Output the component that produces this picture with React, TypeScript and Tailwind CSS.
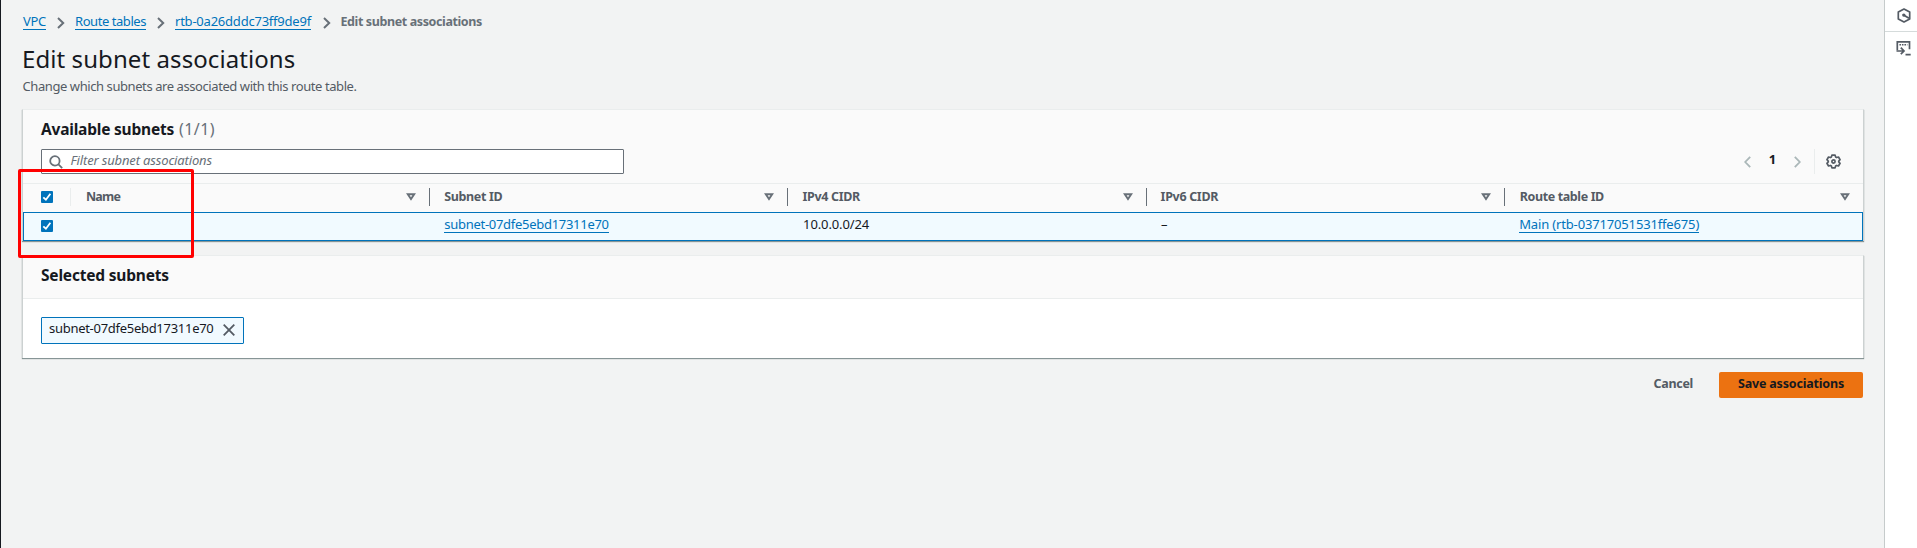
import type { ReactNode } from "react";
import clsx from "clsx";

function Link({ children, className }: { children: ReactNode; className?: string }) {
  return (
    <a
      href="#"
      className={clsx(
        "block h-[18px] whitespace-nowrap border-b border-[#0073bb] leading-[18px] text-[#0073bb]",
        className,
      )}
    >
      {children}
    </a>
  );
}

function Crumb() {
  return (
    <svg className="mt-[5px] h-3 w-2 shrink-0" viewBox="0 0 8 12" fill="none" stroke="#687078" strokeWidth="2">
      <path d="M1 1l5.2 5L1 11" />
    </svg>
  );
}

function Checkbox() {
  return (
    <svg className="size-3 shrink-0" viewBox="0 0 12 12" role="checkbox" aria-checked="true">
      <rect width="12" height="12" rx="1" fill="#0073bb" />
      <path d="M2.3 6.3l2.6 2.4 4.5-5.9" fill="none" stroke="#fff" strokeWidth="1.8" />
    </svg>
  );
}

function SortIcon() {
  return (
    <svg className="ml-auto h-[8px] w-[10px]" viewBox="0 0 10 8" fill="none" stroke="#687078" strokeWidth="1.9">
      <path d="M1.8 1.2h6.4L5 6z" />
    </svg>
  );
}

const columns = [
  { label: "Name", spacing: "tracking-[-0.82px]" },
  { label: "Subnet ID", spacing: "tracking-[-0.35px]" },
  { label: "IPv4 CIDR", spacing: "tracking-[-0.32px]" },
  { label: "IPv6 CIDR", spacing: "tracking-[-0.32px]" },
  { label: "Route table ID", spacing: "tracking-[-0.39px]" },
];

const grid = "grid grid-cols-[49px_repeat(5,minmax(0,1fr))]";

function AvailableSubnets() {
  return (
    <section className="relative h-[132px] border border-b-0 border-x-[#ccd1d1] border-t-[#eaeded] bg-[#fafafa] shadow-[0_1px_1px_#879596]">
      <h2 className="ml-[18px] flex h-[39px] gap-[5px] pt-[7px] text-[15.5px] font-bold leading-[24px] tracking-[-0.21px]">
        Available subnets
        <span className="text-[16px] font-normal tracking-[0.4px] text-[#687078]">(1/1)</span>
      </h2>
      <div className="flex h-[34px] items-start justify-between pl-[18px] pr-[22px]">
        <div className="flex h-[25px] w-[583px] items-center rounded-[1px] border border-[#687078] bg-white pl-[7px]">
          <svg className="size-[14px]" viewBox="0 0 14 14" fill="none" stroke="#687078" strokeWidth="1.8">
            <circle cx="5.9" cy="5.9" r="4.7" />
            <path d="M9.2 9.2l4 4" />
          </svg>
          <span className="-mt-[3px] ml-[7.5px] text-[13px] italic leading-[20px] tracking-[-0.15px] text-[#687078]">
            Filter subnet associations
          </span>
        </div>
        <div className="flex h-[25px] items-center">
          <svg className="h-3 w-[7px]" viewBox="0 0 7 12" fill="none" stroke="#aab7b8" strokeWidth="1.8">
            <path d="M6.2 .8L1.2 6l5 5.2" />
          </svg>
          <span className="-mt-[5px] w-[43px] text-center text-[13px] font-bold leading-[20px]">1</span>
          <svg className="h-3 w-[7px]" viewBox="0 0 7 12" fill="none" stroke="#aab7b8" strokeWidth="1.8">
            <path d="M.8 .8l5 5.2-5 5.2" />
          </svg>
          <span className="ml-[13px] mr-[11px] h-[25px] w-px bg-[#eaeded]" />
          <svg className="size-[15px]" viewBox="0 0 16 16" fill="none" stroke="#545b64" strokeWidth="1.8" strokeLinejoin="round">
            <path d="M6.3 1.2h3.4l.5 1.9 1.2.7 1.9-.6 1.7 2.9-1.4 1.4v1l1.4 1.4-1.7 2.9-1.9-.6-1.2.7-.5 1.9H6.3l-.5-1.9-1.2-.7-1.9.6L1 9.9l1.4-1.4v-1L1 6.1l1.7-2.9 1.9.6 1.2-.7z" />
            <circle cx="8" cy="8" r="1.7" />
          </svg>
        </div>
      </div>
      <div className={clsx(grid, "h-[29px] border-t border-[#eaeded] text-[12.5px] font-bold text-[#545b64]")}>
        <div className="mt-[4px] flex h-[18px] w-[48px] items-center border-r border-[#eaeded] pl-[18px]">
          <Checkbox />
        </div>
        {columns.map((c, i) => (
          <div
            key={c.label}
            className={clsx(
              "mt-[4px] flex h-[18px] items-center pr-[13px]",
              i < 4 ? "border-r border-[#687078] pl-[14px]" : "pl-[15px]",
            )}
          >
            <span className={clsx("whitespace-nowrap leading-[18px]", c.spacing)}>{c.label}</span>
            <SortIcon />
          </div>
        ))}
      </div>
      <div className={clsx(grid, "h-[29px] border border-[#0073bb] bg-[#f1faff] text-[13px]")}>
        <div className="pl-[17px] pt-[7px]">
          <Checkbox />
        </div>
        <div />
        <div className="flex pl-[13.5px] pt-[2px]">
          <Link className="tracking-[-0.285px]">subnet-07dfe5ebd17311e70</Link>
        </div>
        <div className="pl-[14.5px] pt-[2px] leading-[18px] tracking-[-0.12px]">10.0.0.0/24</div>
        <div className="pl-[14.5px] pt-[2px] leading-[18px]">–</div>
        <div className="flex pl-[15px] pt-[2px]">
          <Link className="tracking-[-0.155px]">Main (rtb-03717051531ffe675)</Link>
        </div>
      </div>
      <div className="absolute -left-[5px] top-[59px] h-[89px] w-[176px] rounded-[2px] border-[3px] border-[#ff0000]" />
    </section>
  );
}

function SelectedSubnets() {
  return (
    <section className="mt-[14px] h-[103px] border border-b-0 border-x-[#ccd1d1] border-t-[#eaeded] bg-white shadow-[0_1px_1px_#879596]">
      <h2 className="h-[43px] border-b border-[#eaeded] bg-[#fafafa] pl-[18px] pt-[7px] text-[15.5px] font-bold leading-[24px] tracking-[-0.19px]">
        Selected subnets
      </h2>
      <div className="ml-[18px] mt-[18px] flex h-[27px] w-[203px] items-start rounded-[1px] border border-[#0073bb] bg-[#f1faff] pl-[7px]">
        <span className="whitespace-nowrap text-[13px] leading-[20px] tracking-[-0.285px]">subnet-07dfe5ebd17311e70</span>
        <svg className="ml-[10px] mt-[6px] size-[12px] shrink-0" viewBox="0 0 12 12" fill="none" stroke="#545b64" strokeWidth="1.8">
          <path d="M.7 .7l10.6 10.6M11.3 .7L.7 11.3" />
        </svg>
      </div>
    </section>
  );
}

function ToolsRail() {
  return (
    <aside className="w-[33px] shrink-0 border-l border-[#c6cbcb] bg-white">
      <div className="flex h-[32px] border-b border-[#d5dbdb] pl-[11.5px] pt-[8px]">
        <svg className="h-[15px] w-[14px]" viewBox="0 0 14 15" fill="none" stroke="#545b64" strokeWidth="1.7">
          <path d="M7 1l5.7 3.1v6.8L7 14l-5.7-3.1V4.1z" strokeLinejoin="round" />
          <circle cx="6.8" cy="7.1" r="1.7" fill="#545b64" stroke="none" />
          <path d="M7 7.2l5 3" strokeWidth="1.8" />
        </svg>
      </div>
      <div className="pl-[10.5px] pt-[9px]">
        <svg className="h-[15px] w-[15px]" viewBox="0 0 15 15" fill="none" stroke="#545b64" strokeWidth="1.7">
          <path d="M1.3 9.2V.9h12.2v7.3" />
          <path d="M3.4 3.7h8" strokeWidth="1.4" strokeDasharray="1.6 .9" />
          <path d="M.5 10h7M4.8 6.7L8 10l-3.2 3.2M9.5 13.6h5.2" />
        </svg>
      </div>
    </aside>
  );
}

export default function App() {
  return (
    <div className="flex h-[548px] w-full overflow-hidden border-l border-[#16191f] bg-[#f2f3f3] font-['Noto_Sans',sans-serif] text-[#16191f]">
      <main className="flex-1 pl-[21px] pr-[20px]">
        <nav className="flex h-[44px] items-start pl-px pt-[12px] text-[13px]">
          <Link className="mr-[11px] w-[23px] tracking-[-0.3px]">VPC</Link>
          <Crumb />
          <Link className="ml-[10px] mr-[11px] w-[71px] tracking-[-0.44px]">Route tables</Link>
          <Crumb />
          <Link className="ml-[10px] mr-[11.5px] w-[136px] tracking-[-0.22px]">rtb-0a26dddc73ff9de9f</Link>
          <Crumb />
          <span className="ml-[10px] whitespace-nowrap text-[12.5px] font-bold leading-[20px] tracking-[-0.39px] text-[#687078]">
            Edit subnet associations
          </span>
        </nav>
        <h1 className="h-[32px] text-[24px] leading-[30px] tracking-[0.08px]">Edit subnet associations</h1>
        <p className="h-[33px] pl-[0.5px] text-[13px] leading-[20px] tracking-[-0.42px] text-[#545b64]">
          Change which subnets are associated with this route table.
        </p>
        <AvailableSubnets />
        <SelectedSubnets />
        <div className="mt-[14px] flex justify-end pr-px text-[12.5px] font-bold leading-[22px]">
          <button className="mr-[26px] h-[26px] pb-[2px] tracking-[-0.29px] text-[#545b64]">Cancel</button>
          <button className="h-[26px] w-[144px] rounded-[2px] bg-[#ec7211] pb-[2px] tracking-[-0.18px]">
            Save associations
          </button>
        </div>
      </main>
      <ToolsRail />
    </div>
  );
}
